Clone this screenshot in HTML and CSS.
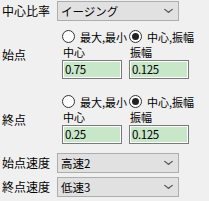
FILE: index.html
```html
<!DOCTYPE html>
<html lang="ja">

<head>
    <meta charset="UTF-8">
    <title>中心比率</title>
    <link rel="stylesheet" href="styles.css">
</head>

<body>
    <div class="panel">
        <div class="row row-top">
            <div class="label">中心比率</div>
            <div class="combo">イージング<span class="chev"></span></div>
        </div>

        <div class="group">
            <div class="group-label">始点</div>
            <div class="group-body">
                <div class="radios">
                    <div class="opt opt-1"><span class="radio"></span>最大,最小</div>
                    <div class="opt"><span class="radio on"></span>中心,振幅</div>
                </div>
                <div class="fields">
                    <div class="field field-1">
                        <div class="cap">中心</div>
                        <div class="input">0.75</div>
                    </div>
                    <div class="field">
                        <div class="cap">振幅</div>
                        <div class="input">0.125</div>
                    </div>
                </div>
            </div>
        </div>

        <div class="group">
            <div class="group-label">終点</div>
            <div class="group-body">
                <div class="radios">
                    <div class="opt opt-1"><span class="radio"></span>最大,最小</div>
                    <div class="opt"><span class="radio on"></span>中心,振幅</div>
                </div>
                <div class="fields">
                    <div class="field field-1">
                        <div class="cap">中心</div>
                        <div class="input">0.25</div>
                    </div>
                    <div class="field">
                        <div class="cap">振幅</div>
                        <div class="input">0.125</div>
                    </div>
                </div>
            </div>
        </div>

        <div class="row">
            <div class="label">始点速度</div>
            <div class="combo">高速2<span class="chev"></span></div>
        </div>
        <div class="row">
            <div class="label">終点速度</div>
            <div class="combo">低速3<span class="chev"></span></div>
        </div>
    </div>
</body>

</html>
```

FILE: styles.css
```css
* {
    padding: 0;
    margin: 0;
    box-sizing: border-box;
}

body {
    background-color: #f0f0f0;
    color: #000;
    font-family: "Noto Sans CJK JP", "Noto Sans", sans-serif;
    font-size: 12px;
    line-height: 14px;
}

.panel {
    width: 209px;
    height: 201px;
}

.row {
    display: flex;
    height: 24px;
}

.row-top {
    height: 22px;
}

.label {
    width: 57px;
    padding-left: 2px;
    line-height: 22px;
}

.combo {
    position: relative;
    width: 122px;
    height: 20px;
    margin-top: 1px;
    padding-left: 3px;
    line-height: 18px;
    font-size: 11.5px;
    background-color: #e1e1e1;
    border: 1px solid #adadad;
}

/* small "v" arrow */
.chev {
    position: absolute;
    right: 7px;
    top: 5px;
    width: 5px;
    height: 5px;
    border-right: 1px solid #555;
    border-bottom: 1px solid #555;
    transform: scaleX(1.3) rotate(45deg);
}

.group {
    display: flex;
    height: 65px;
}

.group-label {
    width: 62px;
    padding-left: 2px;
    display: flex;
    align-items: center;
}

.group-body {
    padding-top: 8px;
}

.radios {
    display: flex;
    height: 13px;
    align-items: center;
    font-size: 11px;
}

.opt {
    display: flex;
    align-items: center;
}

.opt-1 {
    width: 67px;
}

.radio {
    width: 13px;
    height: 13px;
    margin-right: 5px;
    border: 1px solid #333;
    border-radius: 50%;
    background-color: #fff;
    display: flex;
    align-items: center;
    justify-content: center;
}

.radio.on::after {
    content: "";
    width: 7px;
    height: 7px;
    border-radius: 50%;
    background-color: #222;
}

.fields {
    display: flex;
}

.field-1 {
    width: 67px;
}

.cap {
    margin-top: 3px;
    padding-left: 1px;
    height: 12px;
    line-height: 12px;
    font-size: 11px;
}

.input {
    width: 60px;
    height: 19px;
    margin-top: 2px;
    padding-left: 2px;
    line-height: 17px;
    font-size: 11.5px;
    letter-spacing: -0.4px;
    background-color: #c8e6c8;
    border: 1px solid #7a7a7a;
    box-shadow: inset 0 0 0 1px #fff;
}
```
